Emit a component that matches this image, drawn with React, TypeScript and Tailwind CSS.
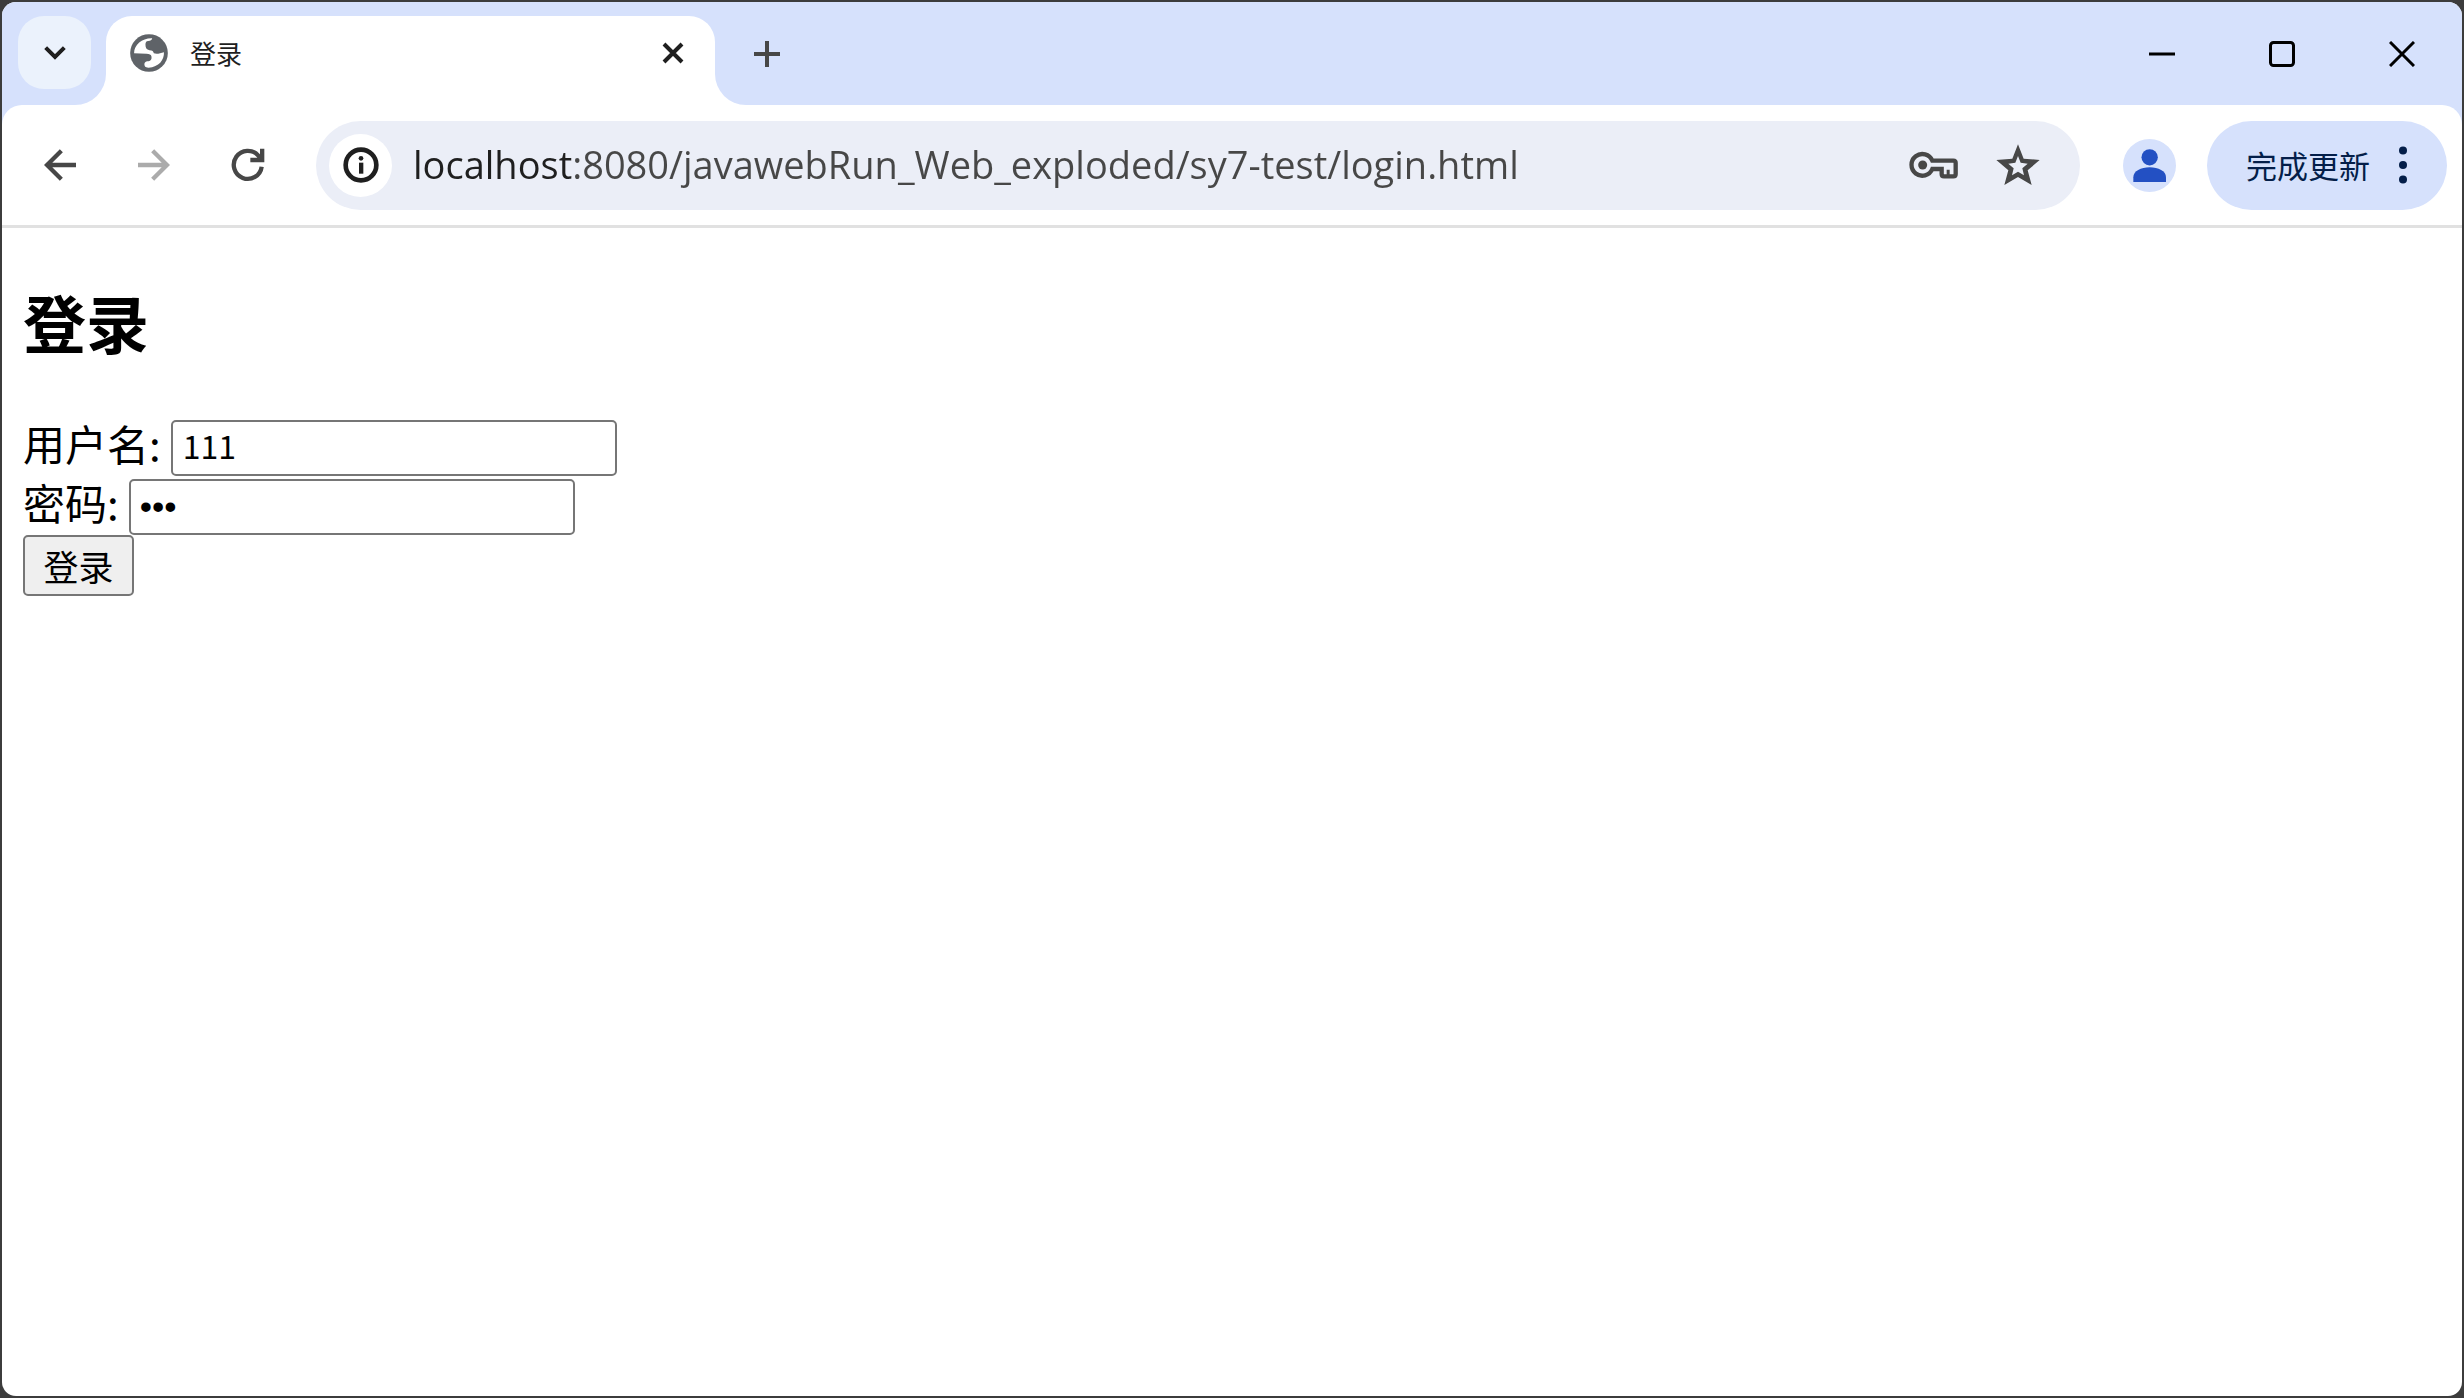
import { useState } from "react";
import type { ReactNode } from "react";

const PAGE_URL = "localhost:8080/javawebRun_Web_exploded/sy7-test/login.html";

export default function App() {
  return (
    <div className="flex min-h-screen flex-col bg-[#3c3c3c] p-[2px] font-['Noto_Sans_CJK_SC',sans-serif]">
      <div className="flex flex-1 flex-col overflow-hidden rounded-[14px] bg-white">
        <TabStrip />
        <Toolbar />
        <LoginPage />
      </div>
    </div>
  );
}

function TabStrip() {
  return (
    <header className="flex h-[103px]">
      <div className="flex items-center rounded-br-[31px] bg-[#d6e1fc] pr-[15px] pb-[2px] pl-4">
        <button
          aria-label="搜索标签页"
          className="flex size-[73px] items-center justify-center rounded-[26px] bg-[#ebf2fc]"
        >
          <svg width="22" height="14" viewBox="0 0 66 42" fill="none" stroke="#1f1f1f" strokeWidth="12">
            <path d="M5 5 33 33 61 5" />
          </svg>
        </button>
      </div>

      {/* lower half is white so that the neighbours' rounded corners flare into the toolbar */}
      <div className="flex w-[609px] bg-linear-to-b from-[#d6e1fc] from-50% to-white to-50% pt-[14px]">
        <div className="flex flex-1 items-center rounded-t-[26px] bg-white pr-[18px] pb-4 pl-6">
          <GlobeIcon />
          <span className="ml-[22px] flex-1 text-[26px] leading-8 text-[#1f1f1f]">登录</span>
          <button aria-label="关闭标签页" className="flex size-12 items-center justify-center">
            <svg width="22" height="22" viewBox="0 0 22 22" stroke="#1f1f1f" strokeWidth="4">
              <path d="M2 2 20 20M20 2 2 20" />
            </svg>
          </button>
        </div>
      </div>

      <div className="flex flex-1 items-center rounded-bl-[31px] bg-[#d6e1fc] pl-7">
        <button aria-label="新标签页" className="flex size-12 items-center justify-center">
          <svg width="26" height="26" viewBox="0 0 26 26" stroke="#474747" strokeWidth="4">
            <path d="M13 0V26M0 13H26" />
          </svg>
        </button>
        <div className="ml-auto flex self-stretch">
          <WindowButton label="最小化">
            <path d="M0 13H26" />
          </WindowButton>
          <WindowButton label="最大化">
            <rect x="1.5" y="1.5" width="23" height="23" rx="3" />
          </WindowButton>
          <WindowButton label="关闭">
            <path d="M1 1 25 25M25 1 1 25" />
          </WindowButton>
        </div>
      </div>
    </header>
  );
}

function WindowButton({ label, children }: { label: string; children: ReactNode }) {
  return (
    <button aria-label={label} className="flex w-[120px] items-center justify-center">
      <svg width="26" height="26" viewBox="0 0 26 26" fill="none" stroke="#000" strokeWidth="3">
        {children}
      </svg>
    </button>
  );
}

function Toolbar() {
  const [url, setUrl] = useState(PAGE_URL);

  return (
    <div className="bg-[#d6e1fc]">
      <div className="flex h-[123px] items-center rounded-t-[20px] border-b-[3px] border-[#e1e1e1] bg-white pr-[15px] pl-[11px]">
        <nav className="flex">
          <button aria-label="后退" className="flex h-12 w-[94px] items-center justify-center">
            <svg width="32" height="32" viewBox="0 0 96 96" fill="none" stroke="#474747" strokeWidth="13">
              <path d="M96 48H10M52 5 9 48 52 91" />
            </svg>
          </button>
          <button aria-label="前进" disabled className="flex h-12 w-[94px] items-center justify-center">
            <svg width="32" height="32" viewBox="0 0 96 96" fill="none" stroke="#ababab" strokeWidth="13">
              <path d="M0 48H86M44 5 87 48 44 91" />
            </svg>
          </button>
          <button aria-label="重新加载" className="flex h-12 w-[94px] items-center justify-center">
            <svg width="34" height="34" viewBox="695 445 102 102" fill="none" stroke="#474747" strokeWidth="13">
              <path d="M787 501A42 42 0 1 1 777 468L786 480" />
              <path d="M788.500 447V481H753" />
            </svg>
          </button>
        </nav>

        <div className="ml-[21px] flex h-[89px] flex-1 items-center rounded-full bg-[#ebeef7] pr-[34px] pl-[13px]">
          <button
            aria-label="查看网站信息"
            className="flex size-[63px] items-center justify-center rounded-full bg-white"
          >
            <svg width="36" height="36" viewBox="0 0 108 108">
              <circle cx="54" cy="54" r="46" fill="none" stroke="#1f1f1f" strokeWidth="14" />
              <circle cx="54" cy="34" r="7" fill="#1f1f1f" />
              <rect x="48" y="47" width="13" height="33" fill="#1f1f1f" />
            </svg>
          </button>
          <input
            aria-label="地址和搜索栏"
            value={url}
            onChange={(e) => setUrl(e.target.value)}
            spellCheck={false}
            className="ml-[21px] h-16 min-w-0 flex-1 bg-linear-to-r from-[#1f1f1f] from-[158px] to-[#474747] to-[158px] bg-clip-text pb-[2px] font-['Open_Sans',sans-serif] text-[38px] text-transparent outline-none"
          />
          <button aria-label="管理密码" className="flex size-14 items-center justify-center">
            <KeyIcon />
          </button>
          <button aria-label="为此标签页添加书签" className="ml-7 flex size-14 items-center justify-center">
            <StarIcon />
          </button>
        </div>

        <button
          aria-label="个人资料"
          className="ml-[43px] flex size-[53px] items-center justify-center rounded-full bg-[#d6e1fc]"
        >
          <svg width="33" height="33" viewBox="0 0 99 99" fill="#2350c3">
            <circle cx="50" cy="25" r="24.500" />
            <path d="M1 99V85C1 66 24 55 50 55S99 66 99 85V99Z" />
          </svg>
        </button>

        <button className="ml-[31px] flex h-[89px] w-[240px] items-center justify-between rounded-full bg-[#d6e1fc] pr-10 pl-[39px] text-[#041e49]">
          <span className="text-[31px] leading-10">完成更新</span>
          <svg width="8" height="38" viewBox="0 0 8 38" fill="currentColor">
            <circle cx="4" cy="4.500" r="4" />
            <circle cx="4" cy="19" r="4" />
            <circle cx="4" cy="33.500" r="4" />
          </svg>
        </button>
      </div>
    </div>
  );
}

function LoginPage() {
  const [username, setUsername] = useState("111");
  const [password, setPassword] = useState("111");

  return (
    <main className="flex-1 px-[21px] pt-[51px] text-black">
      <h2 className="mb-[57px] text-[63px] leading-[84px] font-bold">登录</h2>
      <form className="flex flex-col items-start" onSubmit={(e) => e.preventDefault()}>
        <div className="mb-[3px] flex items-start gap-[10px]">
          <label htmlFor="username" className="text-[42px] leading-[46px]">
            用户名:
          </label>
          <input
            id="username"
            type="text"
            value={username}
            onChange={(e) => setUsername(e.target.value)}
            className="h-14 w-[446px] rounded-[5px] border-2 border-[#767676] bg-white px-[10px] pb-[6px] text-[32px]"
          />
        </div>
        <div className="flex items-start gap-[10px]">
          <label htmlFor="password" className="text-[42px] leading-[46px]">
            密码:
          </label>
          <input
            id="password"
            type="password"
            value={password}
            onChange={(e) => setPassword(e.target.value)}
            className="h-14 w-[446px] rounded-[5px] border-2 border-[#767676] bg-white px-[9px] font-['Liberation_Sans',sans-serif] text-[35px]"
          />
        </div>
        <button
          type="submit"
          className="h-[61px] w-[111px] rounded-[5px] border-2 border-[#767676] bg-[#efefef] text-[35px] leading-[55px]"
        >
          登录
        </button>
      </form>
    </main>
  );
}

function GlobeIcon() {
  return (
    <svg width="38" height="38" viewBox="0 0 113 113">
      <circle cx="56.500" cy="56.500" r="56" fill="#5f6368" />
      <path
        fill="#fff"
        d="M12 57C13 32 36 12 66 13C65 19 61 21 54 21C48 21 46 25 46 32C46 41 49 47 58 48C67 48 69 51 71 57C78 60 89 58 101 54C102 77 86 98 55 100C45 100 42 95 43 88C44 82 49 81 55 81C62 80 65 75 64 68C63 61 58 59 49 59Z"
      />
    </svg>
  );
}

function KeyIcon() {
  return (
    <svg width="50" height="28" viewBox="87 124 150 84" fill="none" stroke="#474747" strokeWidth="13">
      <path d="M157 153H220Q227 153 227 160V193Q227 200 220 200H192Q185 200 185 193V178H157A32.500 32.500 0 1 1 157 153Z" />
      <path d="M204.500 180V198" strokeWidth="9" />
      <circle cx="128" cy="166" r="13.500" fill="#474747" stroke="none" />
    </svg>
  );
}

function StarIcon() {
  return (
    <svg width="44" height="42" viewBox="346 99 132 126" fill="#474747" fillRule="evenodd">
      <path d="M412 100 429 143 477 147 441 178 453 222 412 198 371 222 383 178 347 147 395 143ZM412 135 404 155 383 158 399 172 394 193 412 182 430 193 425 172 441 158 420 155Z" />
    </svg>
  );
}
